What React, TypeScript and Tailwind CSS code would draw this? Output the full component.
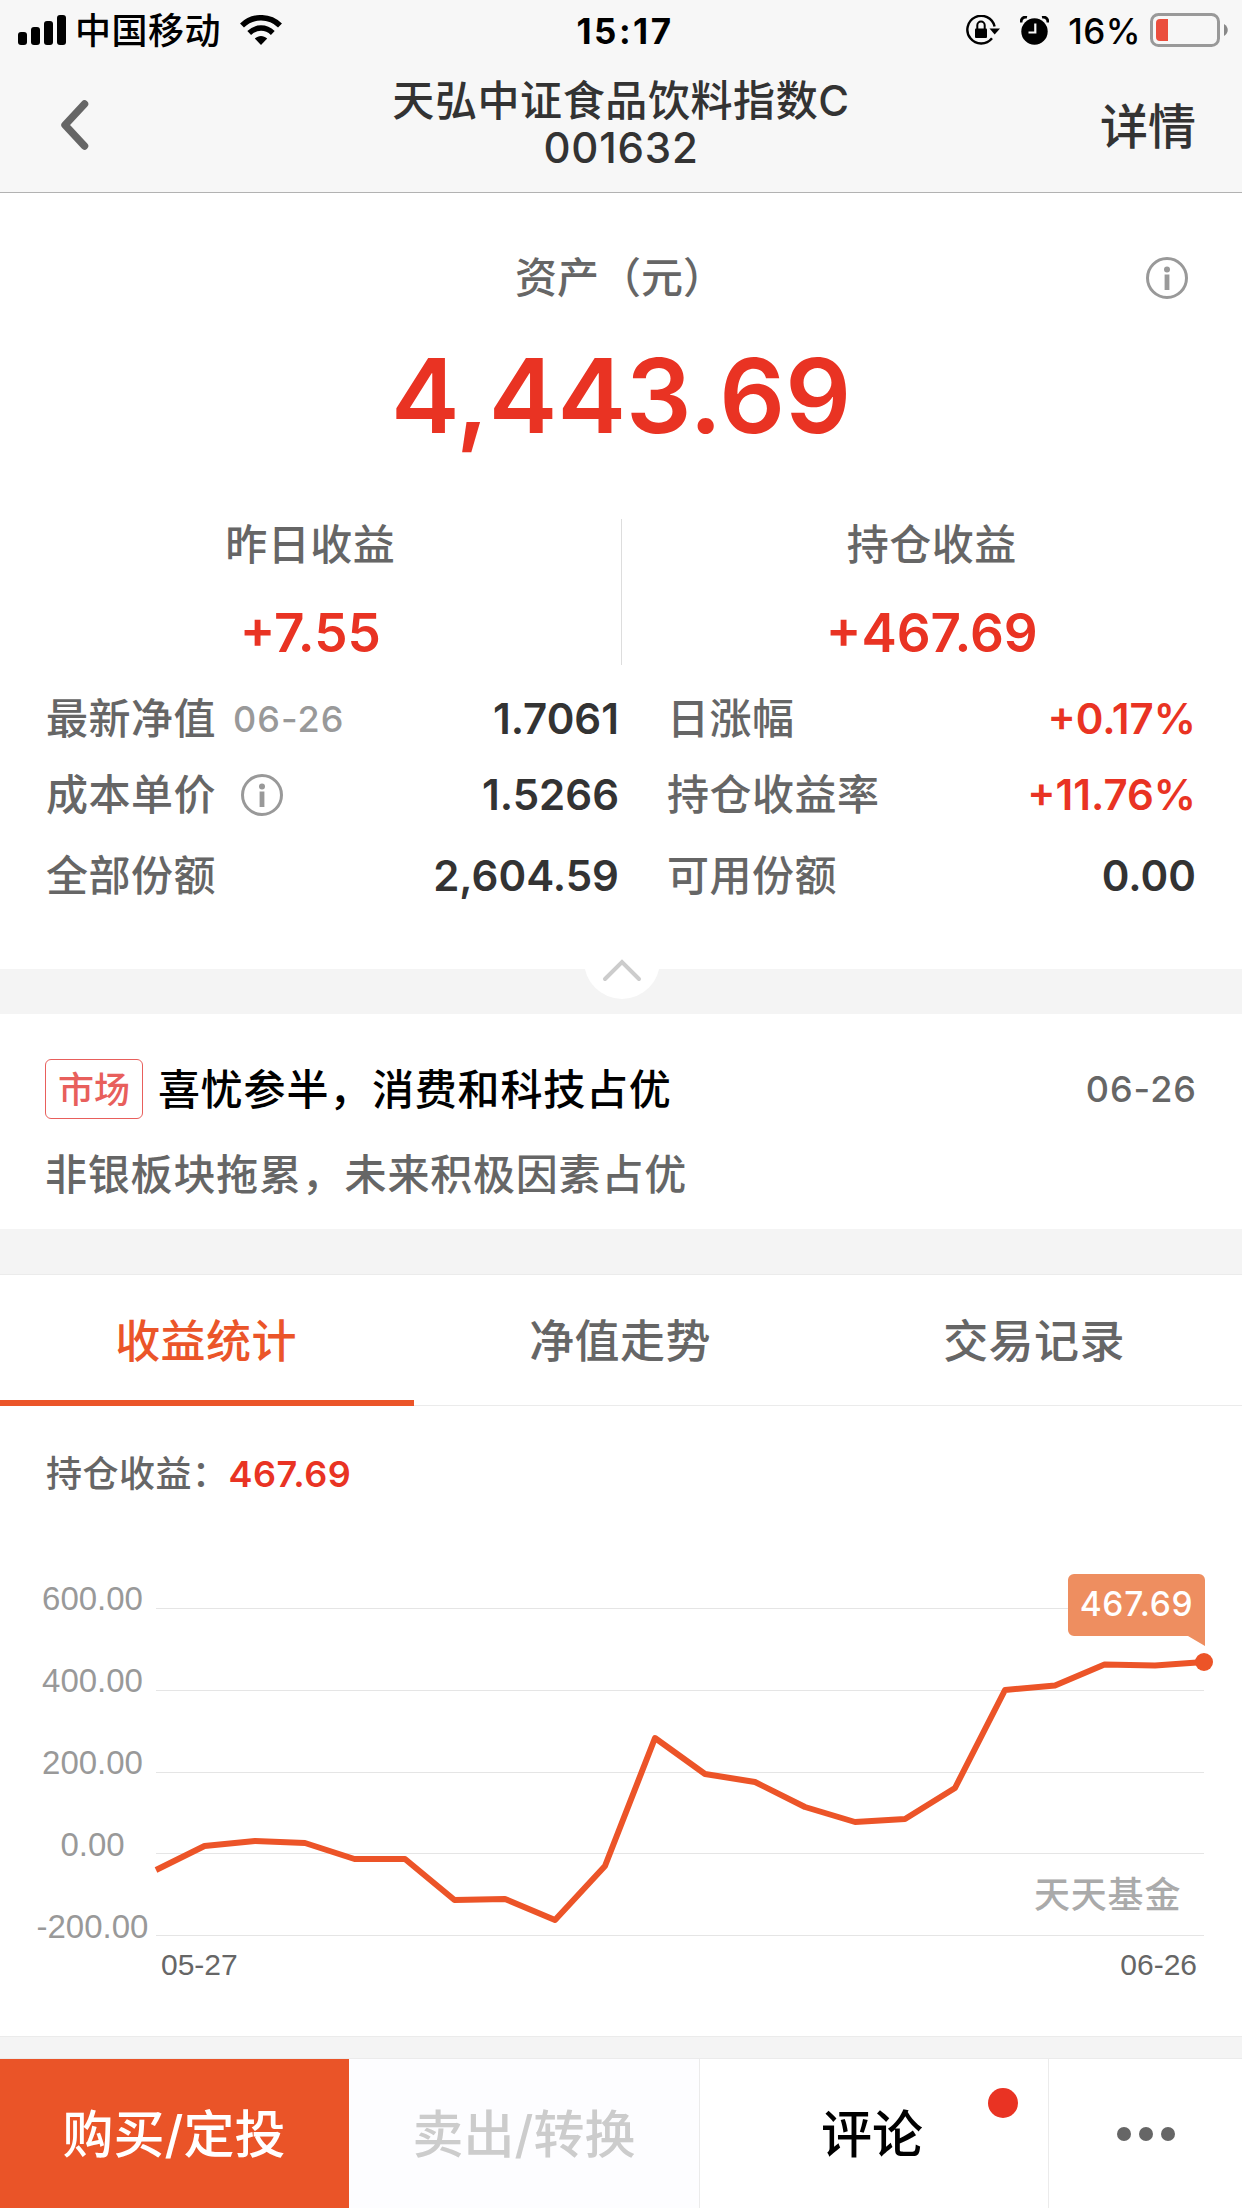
import type { ReactNode } from "react";
import clsx from "clsx";

const points: [number, number][] = [
  [156, 1870], [204.5, 1846], [255, 1841], [305, 1843], [354.5, 1859], [405, 1859],
  [454.5, 1900], [505, 1899], [555, 1920], [605, 1866], [655, 1738], [705, 1774],
  [755, 1782], [805, 1807], [855, 1822], [905, 1819], [955, 1788], [1005, 1690],
  [1055, 1685.5], [1104.5, 1664.5], [1155, 1665.5], [1204, 1662],
];

const gridLines = [1608, 1690, 1772, 1853, 1935];
const yLabels = ["600.00", "400.00", "200.00", "0.00", "-200.00"];
const tabs = ["收益统计", "净值走势", "交易记录"];

function InfoIcon() {
  return (
    <svg className="size-[42px] shrink-0" viewBox="0 0 42 42" fill="none">
      <circle cx="21" cy="21" r="19.5" stroke="#999" strokeWidth="3" />
      <circle cx="21" cy="12.5" r="3" fill="#999" />
      <path d="M21 17.500v15.500" stroke="#999" strokeWidth="4.8" />
    </svg>
  );
}

function StatusBar() {
  return (
    <div className="flex h-[60px] items-center justify-between text-black">
      <div className="flex w-[400px] items-center pl-[18px]">
        <svg className="h-[30px] w-[48px]" viewBox="0 0 48 30">
          <rect x="0" y="17" width="9" height="13" rx="3" />
          <rect x="13" y="12" width="9" height="18" rx="3" />
          <rect x="26" y="6" width="9" height="24" rx="3" />
          <rect x="39" y="0" width="9" height="30" rx="3" />
        </svg>
        <span className="ml-[9px] pt-[2px] text-[36px] leading-[58px] tracking-[0.5px]">中国移动</span>
        <svg className="ml-[19px] h-[30px] w-[42px]" viewBox="0 0 42 30" fill="none">
          <path d="M2 10.5C12.5 .2 29.5 .2 40 10.5" stroke="#000" strokeWidth="5.6" />
          <path d="M9.2 18C16 11.4 26 11.4 32.8 18" stroke="#000" strokeWidth="5.4" />
          <path d="M14.8 23.6c3.8-3.5 8.600-3.5 12.4 0L21 30z" fill="#000" />
        </svg>
      </div>
      <span className="pt-[2px] pl-[8px] text-[35px] leading-[60px] font-bold tracking-[2.5px]">15:17</span>
      <div className="flex w-[400px] items-center justify-end pr-[14px]">
        <svg className="h-[30px] w-[34px]" viewBox="0 0 34 30" fill="none">
          <path d="M28.6 11.5A13.8 13.8 0 1 0 26 23.2" stroke="#000" strokeWidth="2.4" />
          <path d="M23.5 13.5H34L28.7 19.5z" fill="#000" />
          <rect x="9" y="13.5" width="12" height="9.5" rx="1" fill="#000" />
          <path d="M11.3 14V10.2a3.7 3.7 0 0 1 7.4 0V14" stroke="#000" strokeWidth="2" />
        </svg>
        <svg className="ml-[20px] h-[29px] w-[29px]" viewBox="0 0 29 29" fill="none">
          <circle cx="14.5" cy="15.5" r="13.2" fill="#000" />
          <path d="M1 6.5C1 2.5 3.5.5 7 1.2M28 6.5c0-4-2.5-6-6-5.3" stroke="#000" strokeWidth="2.8" />
          <path d="M15.3 7.5v9H8.5" stroke="#f7f7f7" strokeWidth="2.2" />
        </svg>
        <span className="ml-[19px] pt-[2px] text-[35px] leading-[60px] tracking-[0.5px]">16%</span>
        <svg className="ml-[9px] h-[34px] w-[78px]" viewBox="0 0 78 34" fill="none">
          <rect x="1.5" y="1.5" width="67" height="31" rx="7" stroke="#999" strokeWidth="3" />
          <path d="M10 6h8v22h-8a4 4 0 0 1-4-4V10a4 4 0 0 1 4-4z" fill="#eb4e3d" />
          <path d="M74 11c5 3 5 9 0 12z" fill="#888" />
        </svg>
      </div>
    </div>
  );
}

function Header() {
  return (
    <header className="h-[193px] border-b border-[#b2b2b2] bg-[#f7f7f7] text-[#333]">
      <StatusBar />
      <div className="flex h-[132px] items-start justify-between">
        <div className="w-[240px] pt-[38px] pl-[60px]">
          <svg className="h-[54px] w-[30px]" viewBox="0 0 30 54" fill="none">
            <path d="M24.5 6L5 27l19.5 21" stroke="#666" strokeWidth="7.5" strokeLinecap="round" strokeLinejoin="round" />
          </svg>
        </div>
        <div className="flex flex-col items-center pt-[17px]">
          <div className="text-[42px] leading-[48px] tracking-[0.6px]">天弘中证食品饮料指数C</div>
          <div className="text-[42px] leading-[46px] tracking-[0.8px]">001632</div>
        </div>
        <div className="w-[240px] pt-[37px] pr-[46px] text-right text-[48px] leading-[60px]">详情</div>
      </div>
    </header>
  );
}

function Summary({ label, value }: { label: string; value: string }) {
  return (
    <div className="flex flex-1 flex-col items-center">
      <div className="pt-[1px] text-[42px] leading-[50px] tracking-[0.5px]">{label}</div>
      <div className="mt-[32px] text-[53px] leading-[62px] font-semibold text-[#e93323]">{value}</div>
    </div>
  );
}

function Cell({ label, value, red, extra }: { label: string; value: string; red?: boolean; extra?: ReactNode }) {
  return (
    <div className="flex items-center text-[42px] leading-[60px]">
      <span className="pt-[1px] tracking-[0.5px]">{label}</span>
      {extra}
      <span className={clsx("ml-auto text-[42px] font-semibold", red ? "text-[#e93323]" : "text-[#333]")}>
        {value}
      </span>
    </div>
  );
}

function Assets() {
  return (
    <section className="relative h-[776px] text-[#666]">
      <div className="flex h-[125px] items-start justify-between px-[46px] pt-[54px]">
        <div className="w-[48px]" />
        <div className="mt-px text-[42px] leading-[60px]">资产（元）</div>
        <div className="mt-[10px] mr-[8px]">
          <InfoIcon />
        </div>
      </div>
      <div className="mt-[18px] text-center text-[103px] leading-[120px] font-semibold text-[#e93323]">4,443.69</div>
      <div className="mt-[63px] flex h-[146px]">
        <Summary label="昨日收益" value="+7.55" />
        <div className="w-px bg-[#ddd]" />
        <Summary label="持仓收益" value="+467.69" />
      </div>
      <div className="mt-[23px] grid grid-cols-[573px_529px] gap-x-[48px] px-[46px]">
        <Cell
          label="最新净值"
          value="1.7061"
          extra={<span className="ml-[17px] text-[36px] tracking-[1px] text-[#999]">06-26</span>}
        />
        <Cell label="日涨幅" value="+0.17%" red />
        <div className="mt-[15px]">
          <Cell label="成本单价" value="1.5266" extra={<span className="ml-[25px]"><InfoIcon /></span>} />
        </div>
        <div className="mt-[15px]">
          <Cell label="持仓收益率" value="+11.76%" red />
        </div>
        <div className="mt-[20px]">
          <Cell label="全部份额" value="2,604.59" />
        </div>
        <div className="mt-[20px]">
          <Cell label="可用份额" value="0.00" />
        </div>
      </div>
      {/* collapse handle */}
      <div className="absolute top-[730px] left-[584px] z-10 flex size-[76px] items-center justify-center rounded-full bg-white">
        <svg className="mt-[18px] h-[24px] w-[40px]" viewBox="0 0 40 24" fill="none">
          <path d="M3 21L20 4l17 17" stroke="#ccc" strokeWidth="4" strokeLinecap="round" />
        </svg>
      </div>
    </section>
  );
}

function News() {
  return (
    <section className="h-[215px] px-[45px] pt-[45px]">
      <div className="flex h-[60px] items-center">
        <span className="flex h-[60px] w-[98px] items-center justify-center rounded-[6px] border border-[#e85f5c] pt-[2px] text-[36px] text-[#e85f5c]">
          市场
        </span>
        <span className="ml-[15px] pt-px text-[42px] tracking-[0.8px] text-black">喜忧参半，消费和科技占优</span>
        <span className="ml-auto text-[36px] tracking-[1px] text-[#666]">06-26</span>
      </div>
      <div className="mt-[26px] text-[42px] leading-[60px] tracking-[0.8px] text-[#666]">
        非银板块拖累，未来积极因素占优
      </div>
    </section>
  );
}

function Chart() {
  return (
    <svg className="block h-[516px] w-full" viewBox="0 1520 1242 516" fill="none">
      {gridLines.map((y, i) => (
        <g key={y}>
          <path d={`M156 ${y + 0.5}H1204`} stroke="#e5e5e5" />
          <text
            x="92.5"
            y={1610 + i * 82}
            textAnchor="middle"
            fontSize="33"
            fill="#999"
            className="font-['Liberation_Sans'] font-normal"
          >
            {yLabels[i]}
          </text>
        </g>
      ))}
      <text x="161" y="1975" fontSize="30" fill="#666" className="font-['Liberation_Sans'] font-normal">05-27</text>
      <text x="1197" y="1975" fontSize="30" fill="#666" textAnchor="end" className="font-['Liberation_Sans'] font-normal">06-26</text>
      <text x="1034" y="1908" fontSize="36" letterSpacing="0.8" fill="#aaa">天天基金</text>
      <polyline points={points.map((p) => p.join(",")).join(" ")} stroke="#ec5428" strokeWidth="6" strokeLinejoin="round" />
      <circle cx="1204" cy="1662" r="9" fill="#ec5428" />
      <path d="M1074 1574h125a6 6 0 0 1 6 6v66l-17-10h-114a6 6 0 0 1-6-6v-50a6 6 0 0 1 6-6z" fill="#ee8e60" />
      <text x="1136.5" y="1616" fontSize="33.5" letterSpacing="0.7" textAnchor="middle" fill="#fff">467.69</text>
    </svg>
  );
}

function Earnings() {
  return (
    <section className="border-y border-[#ebebeb]">
      <div className="flex h-[131px] border-b border-[#ebebeb] text-[45px] tracking-[0.4px] text-[#666]">
        {tabs.map((tab, i) => (
          <div
            key={tab}
            className={clsx(
              "mb-[-1px] flex flex-1 items-center justify-center border-b-[6px] pt-[8px] pr-[2px]",
              i === 0 ? "border-[#eb5529] text-[#eb5529]" : "border-transparent",
            )}
          >
            {tab}
          </div>
        ))}
      </div>
      <div className="flex h-[114px] items-center pt-[22px] pl-[46px] text-[36px] leading-[60px] text-[#666]">
        <span className="tracking-[0.5px]">持仓收益：</span>
        <span className="font-semibold tracking-[0.5px] text-[#e93323]">467.69</span>
      </div>
      <Chart />
    </section>
  );
}

function BottomBar() {
  return (
    <footer className="flex h-[150px] border-t border-[#ebebeb] text-[51px]">
      <div className="flex w-[349px] items-center justify-center bg-[#ea5428] pt-[4px] pr-px text-white">购买/定投</div>
      <div className="flex w-[351px] items-center justify-center border-r border-[#ebebeb] bg-[#fdfdff] pt-[4px] text-[#ccc]">
        卖出/转换
      </div>
      <div className="relative flex w-[349px] items-center justify-center border-r border-[#ebebeb] pt-[4px] pr-[4px] text-black">
        评论
        <span className="absolute top-[29px] left-[288px] size-[30px] rounded-full bg-[#e93323]" />
      </div>
      <div className="flex flex-1 items-center justify-center gap-[8px]">
        <span className="size-[14px] rounded-full bg-[#666]" />
        <span className="size-[14px] rounded-full bg-[#666]" />
        <span className="size-[14px] rounded-full bg-[#666]" />
      </div>
    </footer>
  );
}

export default function App() {
  return (
    <div className="flex h-[2208px] w-[1242px] flex-col overflow-hidden bg-white font-['Inter','Noto_Sans_CJK_SC',sans-serif] font-medium">
      <Header />
      <Assets />
      <div className="h-[45px] bg-[#f4f4f4]" />
      <News />
      <div className="h-[45px] bg-[#f4f4f4]" />
      <Earnings />
      <div className="flex-1 bg-[#f4f4f4]" />
      <BottomBar />
    </div>
  );
}
